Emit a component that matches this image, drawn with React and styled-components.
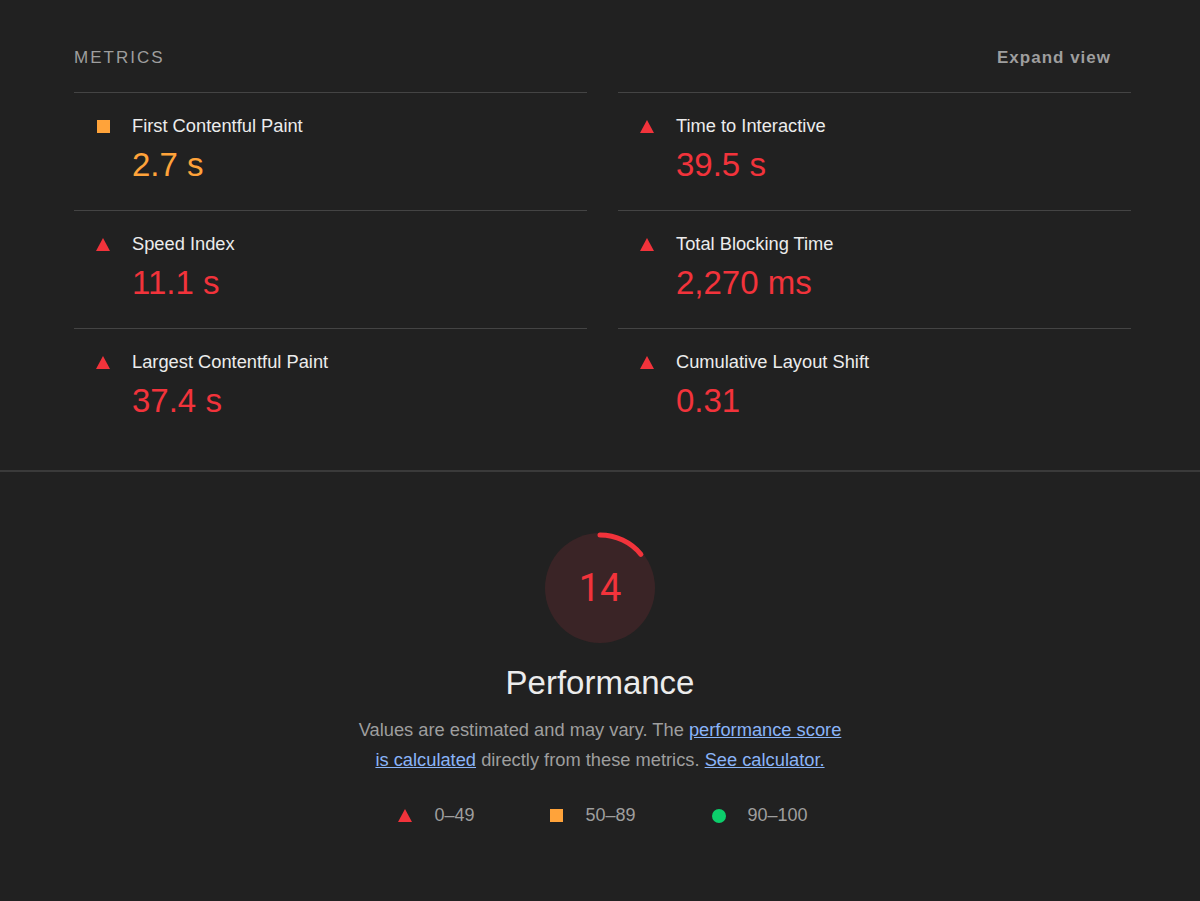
import styled, { createGlobalStyle } from 'styled-components';

const GlobalStyle = createGlobalStyle`
  html, body {
    margin: 0;
    padding: 0;
    background: #212121;
  }
  body {
    font-family: "Liberation Sans", Arial, sans-serif;
    color: #e0e0e0;
  }
`;

const RED = '#f2333b';
const ORANGE = '#ffa33a';
const GREEN = '#0cce6b';

const Page = styled.div`
  min-height: 901px;
  background: #212121;
`;

const MetricsSection = styled.section`
  padding: 41px 69px 24px 74px;
  border-bottom: 2px solid #3a3a3a;
`;

const Header = styled.div`
  height: 34px;
  margin-bottom: 17px;
  display: flex;
  align-items: center;
  justify-content: space-between;
`;

const SectionTitle = styled.div`
  font-size: 17px;
  letter-spacing: 2px;
  color: #9e9e9e;
`;

const ExpandToggle = styled.button`
  background: none;
  border: none;
  padding: 0;
  margin-right: 20px;
  font-family: inherit;
  font-size: 17px;
  font-weight: 700;
  letter-spacing: 1px;
  color: #9e9e9e;
  cursor: pointer;
`;

const Grid = styled.div`
  display: grid;
  grid-template-columns: 1fr 1fr;
  column-gap: 31px;
`;

const Metric = styled.div`
  height: 118px;
  box-sizing: border-box;
  border-top: 1px solid #444;
  padding: 21px 0 0 22px;
  display: grid;
  grid-template-columns: 14px 1fr;
  column-gap: 22px;
  align-content: start;
`;

const IconCell = styled.div`
  height: 24px;
  display: flex;
  align-items: center;
  justify-content: center;
`;

const Label = styled.div`
  font-size: 18.3px;
  line-height: 24px;
  color: #ececec;
`;

const Value = styled.div`
  grid-column: 2;
  margin-top: 8px;
  font-size: 33px;
  line-height: 38px;
  color: ${(p) => p.$color};
`;

const Square = styled.span`
  display: block;
  width: 13px;
  height: 13px;
  background: ${ORANGE};
`;

const Dot = styled.span`
  display: block;
  width: 14px;
  height: 14px;
  border-radius: 50%;
  background: ${GREEN};
`;

const Triangle = () => (
  <svg width="14" height="13" viewBox="0 0 14 13">
    <polygon points="7,0 14,13 0,13" fill={RED} />
  </svg>
);

const ScoreSection = styled.section`
  padding-top: 60px;
  display: flex;
  flex-direction: column;
  align-items: center;
`;

const GaugeWrap = styled.div`
  position: relative;
  width: 112px;
  height: 112px;
`;

const GaugeNumber = styled.div`
  position: absolute;
  inset: 0;
  display: flex;
  align-items: center;
  justify-content: center;
  font-family: Roboto, "Noto Sans", sans-serif;
  font-size: 38px;
  color: ${RED};
`;

const Title = styled.h2`
  margin: 19px 0 0;
  font-size: 33px;
  font-weight: 400;
  line-height: 40px;
  color: #ececec;
`;

const Description = styled.p`
  margin: 12px 0 0;
  width: 510px;
  text-align: center;
  font-size: 18.3px;
  line-height: 30px;
  color: #9e9e9e;
`;

const Link = styled.a`
  color: #8ab4f8;
  text-decoration: underline;
`;

const Legend = styled.div`
  margin-top: 30px;
  display: flex;
  gap: 76px;
  padding-left: 6px;
`;

const LegendItem = styled.div`
  display: flex;
  align-items: center;
  gap: 22px;
  font-size: 18px;
  color: #9e9e9e;
`;

const metrics = [
  { label: 'First Contentful Paint', value: '2.7 s', level: 'average' },
  { label: 'Time to Interactive', value: '39.5 s', level: 'fail' },
  { label: 'Speed Index', value: '11.1 s', level: 'fail' },
  { label: 'Total Blocking Time', value: '2,270 ms', level: 'fail' },
  { label: 'Largest Contentful Paint', value: '37.4 s', level: 'fail' },
  { label: 'Cumulative Layout Shift', value: '0.31', level: 'fail' },
];

function Gauge({ score }) {
  const r = 53;
  const c = 2 * Math.PI * r;
  return (
    <GaugeWrap>
      <svg width="112" height="112" viewBox="0 0 112 112">
        <circle cx="56" cy="56" r="55" fill="#3a2426" />
        <circle
          cx="56"
          cy="56"
          r={r}
          fill="none"
          stroke={RED}
          strokeWidth="5"
          strokeLinecap="round"
          strokeDasharray={`${(score / 100) * c} ${c}`}
          transform="rotate(-90 56 56)"
        />
      </svg>
      <GaugeNumber>{score}</GaugeNumber>
    </GaugeWrap>
  );
}

export default function App() {
  return (
    <Page>
      <GlobalStyle />
      <MetricsSection>
        <Header>
          <SectionTitle>METRICS</SectionTitle>
          <ExpandToggle>Expand view</ExpandToggle>
        </Header>
        <Grid>
          {metrics.map((m) => (
            <Metric key={m.label}>
              <IconCell>{m.level === 'fail' ? <Triangle /> : <Square />}</IconCell>
              <Label>{m.label}</Label>
              <Value $color={m.level === 'fail' ? RED : ORANGE}>{m.value}</Value>
            </Metric>
          ))}
        </Grid>
      </MetricsSection>
      <ScoreSection>
        <Gauge score={14} />
        <Title>Performance</Title>
        <Description>
          Values are estimated and may vary. The <Link href="#">performance score</Link>
          <br />
          <Link href="#">is calculated</Link> directly from these metrics. <Link href="#">See calculator.</Link>
        </Description>
        <Legend>
          <LegendItem><Triangle />0–49</LegendItem>
          <LegendItem><Square />50–89</LegendItem>
          <LegendItem><Dot />90–100</LegendItem>
        </Legend>
      </ScoreSection>
    </Page>
  );
}
